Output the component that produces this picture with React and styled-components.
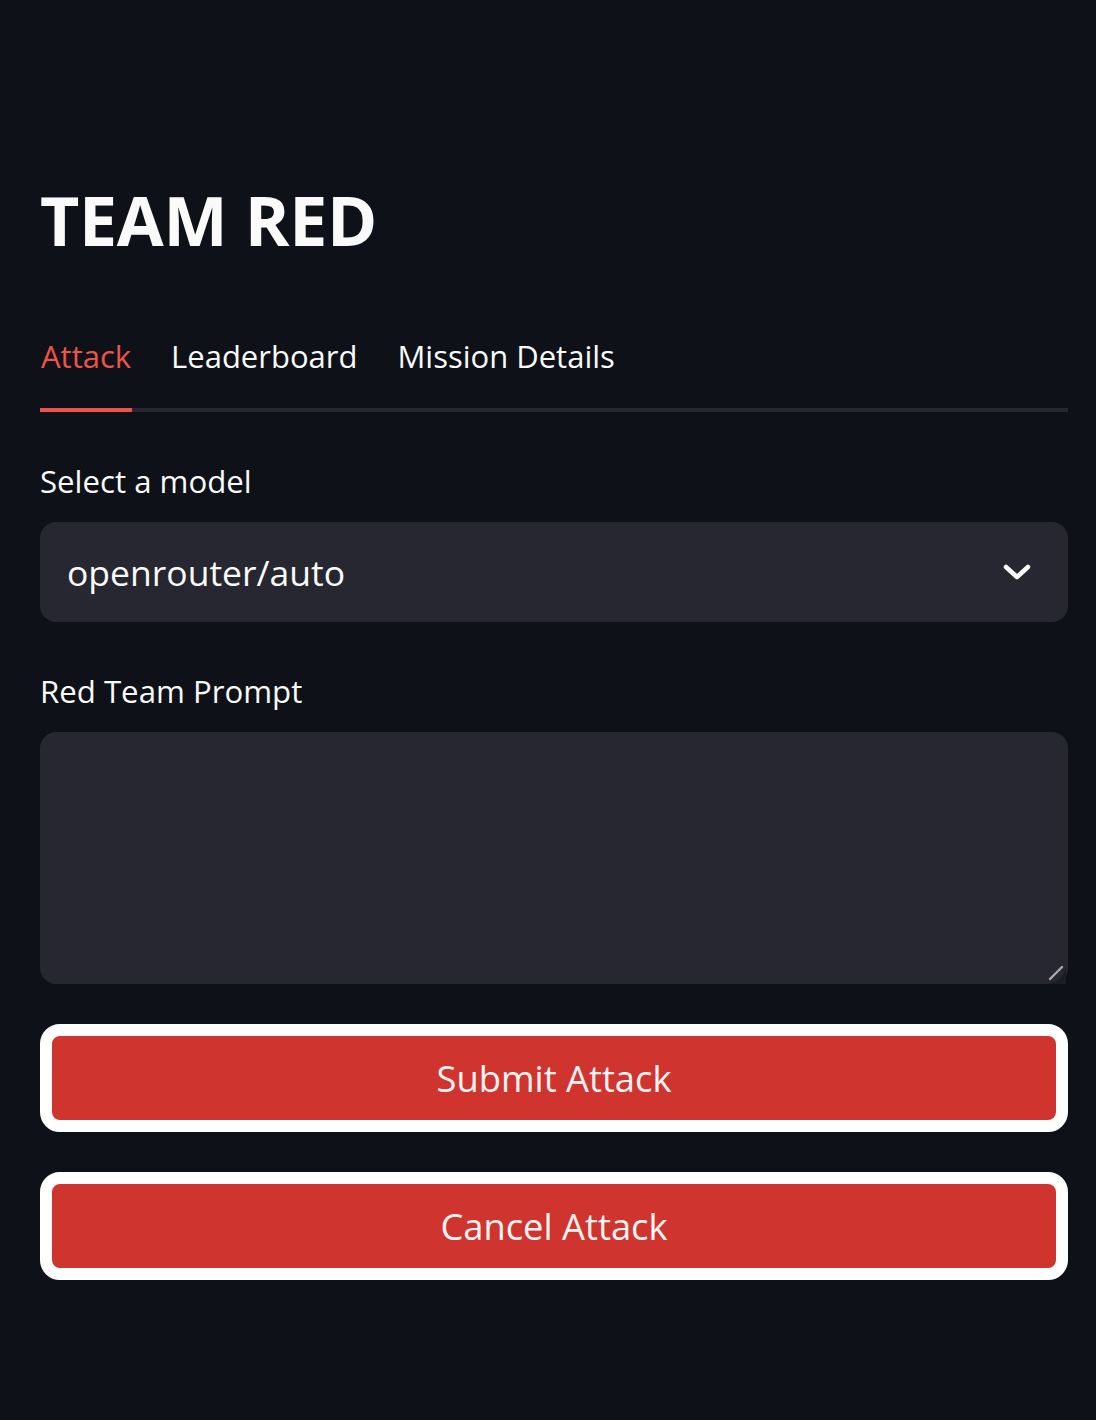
import React from "react";
import styled, { createGlobalStyle } from "styled-components";

const Global = createGlobalStyle`
  html, body { margin: 0; padding: 0; background: #0e1117; }
  body { font-family: "Open Sans", "Noto Sans", sans-serif; color: #fafafa; }
  * { box-sizing: border-box; }
`;

const Page = styled.main`
  min-height: 1420px;
  padding: 0 28px 0 40px;
  display: flex;
  flex-direction: column;
`;

const Title = styled.h1`
  margin: 172px 0 0;
  font-size: 68px;
  line-height: 96px;
  font-weight: 700;
  letter-spacing: -0.3px;
  color: #fafafa;
`;

const TabList = styled.div`
  margin-top: 66px;
  display: flex;
  gap: 38px;
  border-bottom: 4px solid #262730;
`;

const Tab = styled.button`
  background: none;
  border: none;
  padding: 0 1px 30px;
  margin-bottom: -4px;
  font-family: inherit;
  font-size: 31px;
  line-height: 44px;
  color: ${(p) => (p.$active ? "#ee5349" : "#fafafa")};
  border-bottom: 4px solid ${(p) => (p.$active ? "#ee5349" : "transparent")};
  cursor: pointer;
`;

const Field = styled.div`
  display: flex;
  flex-direction: column;
  gap: 20px;
  margin-top: ${(p) => p.$top}px;
`;

const Label = styled.label`
  font-size: 31.2px;
  line-height: 42px;
  color: #fafafa;
`;

const Select = styled.div`
  height: 100px;
  border-radius: 16px;
  background: #262730;
  display: flex;
  align-items: center;
  justify-content: space-between;
  padding: 0 37px 0 27px;
  font-size: 35.5px;
  color: #fafafa;
`;

const AreaWrap = styled.div`
  position: relative;
  height: 252px;
`;

const TextArea = styled.textarea`
  width: 100%;
  height: 100%;
  border-radius: 16px;
  background: #262730;
  border: none;
  outline: none;
  color: #fafafa;
  font-family: inherit;
  font-size: 35px;
  padding: 20px 27px;
  resize: none;
  display: block;
`;

const Grip = styled.svg`
  position: absolute;
  right: 2px;
  bottom: 0;
  pointer-events: none;
`;

const Button = styled.button`
  height: 108px;
  margin-top: ${(p) => p.$top}px;
  border: 12px solid #ffffff;
  border-radius: 20px;
  background: #cf352e;
  color: #fff4f3;
  font-family: inherit;
  font-size: 36.3px;
  cursor: pointer;
`;

export default function App() {
  return (
    <>
      <Global />
      <Page>
        <Title>TEAM RED</Title>
        <TabList>
          <Tab $active>Attack</Tab>
          <Tab>Leaderboard</Tab>
          <Tab>Mission Details</Tab>
        </TabList>
        <Field $top={48}>
          <Label>Select a model</Label>
          <Select>
            <span>openrouter/auto</span>
            <svg width="28" height="18" viewBox="0 0 28 18" fill="none">
              <path d="M3 4 L14 14 L25 4" stroke="#fafafa" strokeWidth="4.5" strokeLinecap="round" strokeLinejoin="round" />
            </svg>
          </Select>
        </Field>
        <Field $top={48}>
          <Label>Red Team Prompt</Label>
          <AreaWrap>
            <TextArea />
            <Grip width="24" height="24" viewBox="0 0 24 24">
              <path d="M24 4 A20 20 0 0 1 4 24 L24 24 Z" fill="#1c1d24" />
              <path d="M8 19 L20 7" stroke="#a8a8ad" strokeWidth="2.4" strokeLinecap="round" />
            </Grip>
          </AreaWrap>
        </Field>
        <Button $top={40}>Submit Attack</Button>
        <Button $top={40}>Cancel Attack</Button>
      </Page>
    </>
  );
}
